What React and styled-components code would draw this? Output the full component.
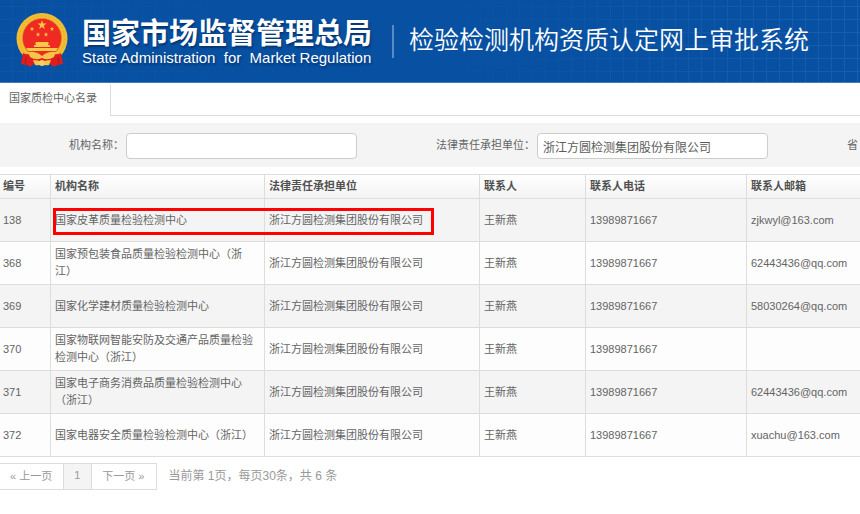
import React, { useState } from 'react'
import styled, { createGlobalStyle } from 'styled-components';

const COMPANY = '浙江方圆检测集团股份有限公司';

const columns = [
  { title: '编号', width: '51px' },
  { title: '机构名称', width: '214px' },
  { title: '法律责任承担单位', width: '215px' },
  { title: '联系人', width: '106px' },
  { title: '联系人电话', width: '161px' },
  { title: '联系人邮箱', width: 'auto' },
];

const rows = [
  { id: 138, name: '国家皮革质量检验检测中心', email: 'zjkwyl@163.com', marked: true },
  { id: 368, name: '国家预包装食品质量检验检测中心（浙江）', email: '62443436@qq.com' },
  { id: 369, name: '国家化学建材质量检验检测中心', email: '58030264@qq.com' },
  { id: 370, name: '国家物联网智能安防及交通产品质量检验检测中心（浙江）', email: '' },
  { id: 371, name: '国家电子商务消费品质量检验检测中心（浙江）', email: '62443436@qq.com' },
  { id: 372, name: '国家电器安全质量检验检测中心（浙江）', email: 'xuachu@163.com' },
];

const STAR = '0,-1 .24,-.32 .95,-.31 .38,.12 .59,.81 0,.4 -.59,.81 -.38,.12 -.95,-.31 -.24,-.32';

function Emblem() {
  return (
    <EmblemSvg viewBox='0 0 52 56' aria-hidden='true'>
      <circle cx='26' cy='25.5' r='25.5' fill='#f2bd35' />
      <circle cx='26' cy='25.5' r='22.5' fill='none' stroke='#e6ab2c' strokeWidth='1' strokeDasharray='2 2' />
      <circle cx='26' cy='25' r='19.5' fill='#ee2a22' stroke='#d58a1b' strokeWidth='.6' />
      <g fill='#f8c944'>
        <polygon points={STAR} transform='translate(26 12) scale(4.8)' />
        <polygon points={STAR} transform='translate(16 16) scale(2.4)' />
        <polygon points={STAR} transform='translate(36 16) scale(2.4)' />
        <polygon points={STAR} transform='translate(22 21.5) scale(2.4)' />
        <polygon points={STAR} transform='translate(30 21.5) scale(2.4)' />
        <path d='M20 29 H32 L33 31 H19 Z M20 31 H32 V32 H34 V34 H18 V32 H20 Z' />
        <path d='M10 35 H42 L40 38 H12 Z' />
      </g>
      <path d='M7 40 Q10 42 14 41 L19 45 L33 45 L38 41 Q42 42 45 40 L47 51 L41 52 L38 54 L33 50 H19 L14 54 L11 52 L5 51 Z' fill='#df1c1e' />
      <path d='M10 44 L9 51 M42 44 L43 51' fill='none' stroke='#b81319' strokeWidth='1' />
      <path d='M12 39 Q20 38 26 43 Q32 38 40 39 L38 44 Q32 48 26 45 Q20 48 14 44 Z' fill='#f5c44b' />
      <path d='M17 47 Q22 47 26 49 Q30 47 35 47 L33 52 Q29 53 26 51 Q23 53 19 52 Z' fill='#f5c44b' />
      <circle cx='26' cy='50' r='3' fill='#f7cf63' />
    </EmblemSvg>
  )
}

export default function App() {
  const [orgName, setOrgName] = useState('');
  const [company, setCompany] = useState(COMPANY);
  const [province, setProvince] = useState('');

  return (
    <>
      <GlobalStyle />
      <Header>
        <Emblem />
        <Brand>
          <BrandName>国家市场监督管理总局</BrandName>
          <BrandSub>State Administration  for  Market Regulation</BrandSub>
        </Brand>
        <SystemName>检验检测机构资质认定网上审批系统</SystemName>
      </Header>

      <Tabs>
        <Tab href='#list'>国家质检中心名录</Tab>
      </Tabs>

      <SearchBar>
        <Field>
          <label htmlFor='orgName'>机构名称：</label>
          <Input id='orgName' value={orgName} onChange={e => setOrgName(e.target.value)} />
        </Field>
        <Field>
          <label htmlFor='company'>法律责任承担单位：</label>
          <Input id='company' value={company} onChange={e => setCompany(e.target.value)} />
        </Field>
        <Field>
          <label htmlFor='province'>省</label>
          <Input id='province' value={province} onChange={e => setProvince(e.target.value)} />
        </Field>
      </SearchBar>

      <Table id='list'>
        <thead>
          <tr>
            {columns.map(c => <Th key={c.title} $width={c.width}>{c.title}</Th>)}
          </tr>
        </thead>
        <tbody>
          {rows.map(r => (
            <Row key={r.id}>
              <Td>{r.id}</Td>
              <Td>
                {r.name}
                {r.marked && <Mark />}
              </Td>
              <Td>{COMPANY}</Td>
              <Td>王新燕</Td>
              <Td>13989871667</Td>
              <Td>{r.email}</Td>
            </Row>
          ))}
        </tbody>
      </Table>

      <Pager>
        <PageButton>« 上一页</PageButton>
        <PageButton $active>1</PageButton>
        <PageButton>下一页 »</PageButton>
        <PageInfo>当前第 1页，每页30条，共 6 条</PageInfo>
      </Pager>
    </>
  )
}

const GlobalStyle = createGlobalStyle`
* {
  box-sizing: border-box;
}
body {
  margin: 0;
  background-color: #fff;
  color: #646464;
  font-family: "Liberation Sans", "Noto Sans CJK SC", sans-serif;
  font-size: 11px;
  line-height: 17px;
}
`

const Header = styled.header`
display: flex;
align-items: center;
height: 83px;
padding-left: 16px;
border-bottom: 1px solid #3f7cbd;
color: #fff;
white-space: nowrap;
overflow: hidden;
background-color: #0750a2;
background-image:
  linear-gradient(90deg, #0750a299, #0750a2 30%, #0750a2 50%, #0750a200),
  repeating-linear-gradient(90deg, transparent 0 12px, #175fae 12px 13px),
  repeating-linear-gradient(180deg, transparent 0 12px, #175fae 12px 13px);
background-position: 0 0, 0 0, 0 -6px;
background-size: 100% 100%, 100% 100%, 100% 104px;
`

const EmblemSvg = styled.svg`
flex: none;
width: 52px;
height: 56px;
margin-right: 14px;
`

const Brand = styled.div`
flex: none;
width: 310px;
text-shadow: 1px 2px 2px #06356e;
`

const BrandName = styled.h1`
margin: 0;
font-size: 29px;
line-height: 34px;
font-weight: bold;
`

const BrandSub = styled.div`
font-size: 15px;
line-height: 14px;
white-space: pre;
`

const SystemName = styled.div`
border-left: 2px solid #5a8cc4;
padding: 0 0 6px 15px;
font-size: 25px;
line-height: 27px;
font-family: "Noto Sans CJK SC", sans-serif;
font-weight: 350;
`

const Tabs = styled.nav`
display: flex;
height: 33px;
border-bottom: 1px solid #ddd;
`

const Tab = styled.a`
height: 33px;
padding: 7px 13px 0 9px;
border-right: 1px solid #ddd;
border-top-right-radius: 3px;
background-color: #fff;
color: #646464;
text-decoration: none;
`

const SearchBar = styled.form`
display: flex;
gap: 79px;
margin: 7px 0;
padding: 10px 0 8px 69px;
background-color: #f4f4f4;
overflow: hidden;
`

const Field = styled.div`
display: flex;
flex: none;
gap: 2px;
line-height: 24px;
`

const Input = styled.input`
width: 231px;
height: 26px;
padding: 0 5px;
border: 1px solid #ccc;
border-radius: 4px;
background-color: #fff;
color: #5c5c5c;
font-family: inherit;
font-size: 12px;
outline: none;
`

const Table = styled.table`
width: 100%;
table-layout: fixed;
border-collapse: separate;
border-spacing: 0;
border-top: 1px solid #ddd;
`

const Th = styled.th`
width: ${props => props.$width};
height: 24px;
padding: 0 4px;
border-right: 1px solid #ddd;
border-bottom: 1px solid #ddd;
background-image: linear-gradient(#fff, #f3f3f3);
color: #505050;
text-align: left;

&:first-child {
  padding-left: 3px;
}
&:last-child {
  border-right: none;
}
`

const Td = styled.td`
position: relative;
height: 43px;
padding: 4px 8px 4px 4px;
border-right: 1px solid #ddd;
border-bottom: 1px solid #ddd;

&:first-child {
  padding-left: 3px;
}
&:last-child {
  border-right: none;
}
`

const Row = styled.tr`
background-color: #fdfdfd;

&:nth-child(odd) {
  background-color: #f4f4f4;
}
`

// red frame over the name and company cells
const Mark = styled.span`
position: absolute;
z-index: 1;
top: 9px;
bottom: 6px;
left: 2px;
right: -170px;
border: 3px solid #f00;
`

const Pager = styled.div`
display: flex;
margin-top: 6px;
color: #999;
`

const PageButton = styled.button`
height: 27px;
padding: 0 11px 4px 10px;
border: 1px solid #ddd;
border-left: none;
background-color: ${props => props.$active ? '#f4f4f4' : '#fff'};
color: #999;
font-family: inherit;
font-size: 11px;
`

const PageInfo = styled.span`
padding: 0 12px;
font-size: 12px;
line-height: 26px;
`
